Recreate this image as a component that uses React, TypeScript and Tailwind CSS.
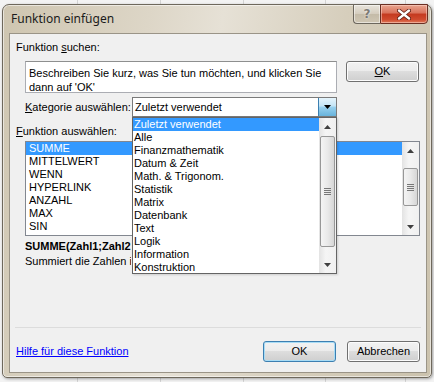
import React from "react";

function Btn({ children, def = false, className = "" }: { children: React.ReactNode; def?: boolean; className?: string }) {
  return (
    <div
      className={
        "flex items-center justify-center rounded-[3px] border text-[11px] leading-[13px] text-black " +
        (def
          ? "border-[#3c7fb1] shadow-[inset_0_0_0_1px_#a8dcf5] bg-[linear-gradient(180deg,#f2f2f2_0%,#ebebeb_49%,#dddddd_50%,#cfcfcf_100%)] "
          : "border-[#707070] shadow-[inset_0_0_0_1px_#fcfcfc] bg-[linear-gradient(180deg,#f2f2f2_0%,#ebebeb_49%,#dddddd_50%,#cfcfcf_100%)] ") +
        className
      }
    >
      {children}
    </div>
  );
}

function ArrowUp() {
  return (
    <svg width="7" height="4" viewBox="0 0 7 4">
      <path d="M0 4 L3.5 0 L7 4 Z" fill="#404040" />
    </svg>
  );
}
function ArrowDown({ color = "#404040" }: { color?: string }) {
  return (
    <svg width="7" height="4" viewBox="0 0 7 4">
      <path d="M0 0 L7 0 L3.5 4 Z" fill={color} />
    </svg>
  );
}

function Grip() {
  return (
    <div className="flex flex-col gap-[1px]">
      <div className="h-[1px] w-[7px] bg-[#777]" />
      <div className="h-[1px] w-[7px] bg-[#777]" />
      <div className="h-[1px] w-[7px] bg-[#777]" />
      <div className="h-[1px] w-[7px] bg-[#777]" />
    </div>
  );
}

function Scrollbar({ thumbTop, thumbH }: { thumbTop: number; thumbH: number }) {
  return (
    <div className="flex h-full w-[17px] flex-col items-center bg-[linear-gradient(90deg,#e3e3e3,#f5f5f5_40%,#f0f0f0)]">
      <div className="flex h-[17px] w-full items-center justify-center">
        <ArrowUp />
      </div>
      <div className="relative w-full flex-1">
        <div
          className="absolute left-[1px] flex w-[15px] items-center justify-center rounded-[2px] border border-[#979797] bg-[linear-gradient(90deg,#f4f4f4,#e9e9e9_50%,#d6d6d6)]"
          style={{ top: thumbTop, height: thumbH }}
        >
          <Grip />
        </div>
      </div>
      <div className="flex h-[17px] w-full items-center justify-center">
        <ArrowDown />
      </div>
    </div>
  );
}

const categories = [
  "Zuletzt verwendet",
  "Alle",
  "Finanzmathematik",
  "Datum & Zeit",
  "Math. & Trigonom.",
  "Statistik",
  "Matrix",
  "Datenbank",
  "Text",
  "Logik",
  "Information",
  "Konstruktion",
];

const functions = ["SUMME", "MITTELWERT", "WENN", "HYPERLINK", "ANZAHL", "MAX", "SIN"];

export default function App() {
  return (
    <div className="h-[382px] w-[434px] overflow-hidden bg-[#f3f3f3] bg-[linear-gradient(90deg,transparent_77px,#d4d4d4_77px,#d4d4d4_78px,transparent_78px,transparent_160px,#d4d4d4_160px,#d4d4d4_161px,transparent_161px,transparent_243px,#d4d4d4_243px,#d4d4d4_244px,transparent_244px,transparent_325px,#d4d4d4_325px,#d4d4d4_326px,transparent_326px,transparent_405px,#d4d4d4_405px,#d4d4d4_406px,transparent_406px)] pl-[2px] pt-[4px] font-['Liberation_Sans',Arial,sans-serif]">
      <div className="relative flex h-[374px] w-[430px] flex-col rounded-b-[5px] rounded-t-[7px] border border-[#6e685c] bg-[linear-gradient(100deg,#cec5b0_0%,#ddd6c7_30%,#e6e1d6_45%,#d6cebc_70%,#cbc2ad_100%)] shadow-[inset_0_0_0_1px_rgba(255,255,255,0.55),1px_1px_3px_rgba(0,0,0,0.35)]">
        {/* title bar */}
        <div className="relative flex h-[28px] items-center pl-[8px]">
          <span className="font-['Noto_Sans',sans-serif] text-[12px] leading-[14px] text-[#1b1b1b]">Funktion einfügen</span>
          <div className="absolute right-[3px] top-[-1px] flex h-[20px]">
            <div className="flex w-[27px] items-center justify-center rounded-bl-[4px] border border-r-0 border-[#6c675d] bg-[linear-gradient(180deg,#e8e4dc,#d4ccbd_50%,#c4bba8_51%,#cfc6b3)] shadow-[inset_0_0_0_1px_rgba(255,255,255,0.5)]">
              <span className="font-['DejaVu_Sans',sans-serif] text-[12px] font-bold leading-[12px] text-[#7d7a74] [text-shadow:0_0_2px_#fff]">?</span>
            </div>
            <div className="flex w-[48px] items-center justify-center rounded-br-[4px] border border-[#6a2e22] bg-[linear-gradient(180deg,#e9a590,#d9715a_45%,#c4391f_50%,#cf4a2e_80%,#e07a5a)] shadow-[inset_0_0_0_1px_rgba(255,220,210,0.5)]">
              <svg width="14" height="11" viewBox="0 0 14 11">
                <path d="M2 1.5 L12 9.5 M12 1.5 L2 9.5" stroke="#5a1a10" strokeWidth="4" strokeLinecap="round" />
                <path d="M2 1.5 L12 9.5 M12 1.5 L2 9.5" stroke="#ffffff" strokeWidth="2.4" strokeLinecap="round" />
              </svg>
            </div>
          </div>
        </div>

        {/* client area */}
        <div className="relative mb-[4px] ml-[6px] mr-[4px] flex flex-1 flex-col border border-[#9a9487] bg-[#f0f0f0] text-[11px] leading-[13px] text-black">
          <div className="ml-[6px] mt-[7px]">
            Funktion <span className="underline">s</span>uchen:
          </div>
          <div className="mt-[7px] flex items-start">
            <div className="ml-[15px] h-[32px] w-[312px] border border-[#abadb3] border-t-[#8e8f8f] bg-white px-[3px] pt-[4px] leading-[14px]">
              Beschreiben Sie kurz, was Sie tun möchten, und klicken Sie dann auf 'OK'
            </div>
            <Btn className="ml-[9px] h-[21px] w-[73px]">
              <span>
                <span className="underline">O</span>K
              </span>
            </Btn>
          </div>
          <div className="mt-[4px] flex items-center">
            <div className="ml-[15px] w-[107px]">
              <span className="underline">K</span>ategorie auswählen:
            </div>
            <div className="flex h-[20px] w-[205px] items-center border border-[#7a7a7a] bg-white">
              <span className="flex-1 pl-[2px]">Zuletzt verwendet</span>
              <div className="flex h-full w-[18px] items-center justify-center border-l border-[#3c7fb1] bg-[linear-gradient(180deg,#e5f4fc,#c4e5f6_45%,#98d1ef_50%,#68b3db)]">
                <ArrowDown color="#000" />
              </div>
            </div>
          </div>
          <div className="ml-[6px] mt-[8px] w-[115px] overflow-hidden whitespace-nowrap">
            <span className="underline">F</span>unktion auswählen:
          </div>
          <div className="ml-[15px] mt-[3px] flex h-[95px] w-[395px] border border-[#828790] bg-white">
            <div className="flex flex-1 flex-col">
              {functions.map((f, i) => (
                <div
                  key={f}
                  className={
                    "h-[13px] pl-[3px] leading-[13px] " + (i === 0 ? "bg-[#3399ff] text-white" : "")
                  }
                >
                  {f}
                </div>
              ))}
            </div>
            <Scrollbar thumbTop={9} thumbH={38} />
          </div>
          <div className="ml-[15px] mt-[4px] w-[106px] overflow-hidden whitespace-nowrap font-bold">SUMME(Zahl1;Zahl2</div>
          <div className="ml-[15px] mt-[2px] w-[106px] overflow-hidden whitespace-nowrap">Summiert die Zahlen in</div>

          <div className="flex-1" />
          <div className="ml-[5px] mr-[5px] h-[1px] bg-[#dcdcdc]" />
          <div className="mb-[10px] mt-[13px] flex items-center">
            <span className="ml-[6px] text-[#0000ff] underline">Hilfe für diese Funktion</span>
            <div className="flex-1" />
            <Btn def className="h-[21px] w-[73px]">
              OK
            </Btn>
            <Btn className="ml-[11px] mr-[6px] h-[21px] w-[73px]">Abbrechen</Btn>
          </div>

          {/* dropdown overlay */}
          <div className="absolute left-[122px] top-[83px] flex h-[157px] w-[205px] border border-[#646464] bg-white shadow-[1px_1px_2px_rgba(0,0,0,0.15)]">
            <div className="flex flex-1 flex-col">
              {categories.map((c, i) => (
                <div
                  key={c}
                  className={"h-[13px] pl-[1px] leading-[13px] " + (i === 0 ? "bg-[#3399ff] text-white" : "")}
                >
                  {c}
                </div>
              ))}
            </div>
            <Scrollbar thumbTop={1} thumbH={111} />
          </div>
        </div>
      </div>
    </div>
  );
}
